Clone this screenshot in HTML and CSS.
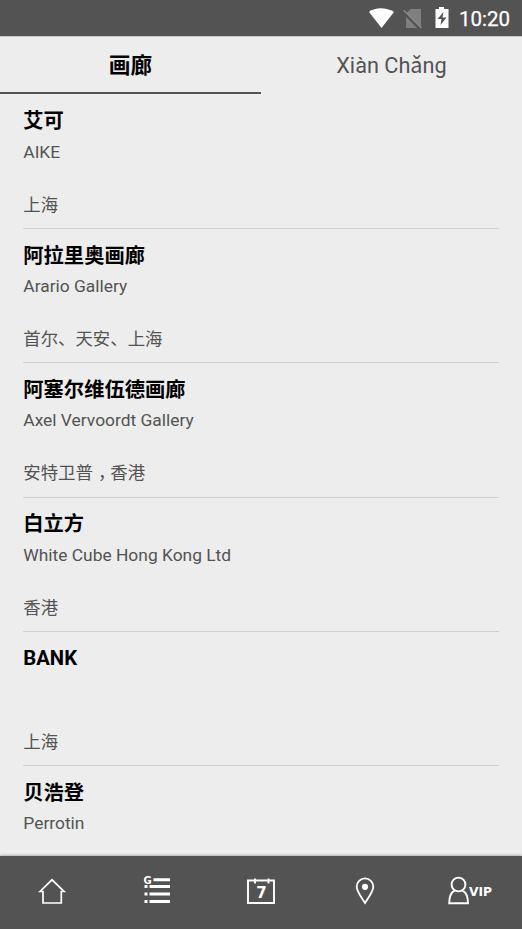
FILE: index.html
```html
<!DOCTYPE html>
<html lang="zh-CN">
<head>
<meta charset="utf-8">
<title>画廊</title>
<link rel="stylesheet" href="styles.css">
</head>
<body>
<div class="app">
  <header class="status">
    <svg class="status-icons" viewBox="0 0 84 36">
      <path d="M3 12C9 7 20 7 28 12L15.500 28Z" fill="#fff"/>
      <path d="M44 9h10.500v19H39.500V13.500z" transform="translate(.5 0)" fill="#7f7f7f"/>
      <path d="M37.300 11.500L54 28.500" stroke="#535353" stroke-width="3.500"/>
      <path d="M37.800 10.300L55.500 28" stroke="#8b8b8b" stroke-width="1.600"/>
      <path d="M69.500 9h3.500V7h5v2h4.500v19h-13z" fill="#fff"/>
      <path d="M77.500 12L71.500 19h4l-1 6 6-7.500h-4z" fill="#535353"/>
    </svg>
    <span class="clock">10:20</span>
  </header>
  <nav class="tabs">
    <a class="tab active">画廊</a>
    <a class="tab">Xiàn Chǎng</a>
  </nav>
  <main class="list">
    <article class="row"><h2>艾可</h2><p class="en">AIKE</p><p class="city">上海</p></article>
    <article class="row"><h2>阿拉里奥画廊</h2><p class="en">Arario Gallery</p><p class="city">首尔、天安、上海</p></article>
    <article class="row"><h2>阿塞尔维伍德画廊</h2><p class="en">Axel Vervoordt Gallery</p><p class="city">安特卫普<span class="comma">，</span>香港</p></article>
    <article class="row"><h2>白立方</h2><p class="en">White Cube Hong Kong Ltd</p><p class="city">香港</p></article>
    <article class="row"><h2>BANK</h2><p class="en"></p><p class="city">上海</p></article>
    <article class="row"><h2>贝浩登</h2><p class="en">Perrotin</p></article>
  </main>
  <footer class="bar">
    <a><svg viewBox="0 0 52 40"><path d="M14 21.500L26 9.800 38 21.500H35.300V33H17V21.500Z" fill="none" stroke="#fff" stroke-width="1.700"/></svg></a>
    <a><svg viewBox="0 0 52 40"><text class="g" x="12.600" y="14.200">G</text><path d="M22.500 9.700H39M18.500 16.500H39M18.500 24H39M18.500 31.500H39M13.500 16.500h3M13.500 24h3M13.500 31.500h3" stroke="#fff" stroke-width="2.900"/></svg></a>
    <a><svg viewBox="0 0 52 40"><path d="M13 10.500H39V33H13ZM20 8.500v5M33.500 8.500v5" fill="none" stroke="#fff" stroke-width="1.900"/><text class="seven" x="21.300" y="28">7</text></svg></a>
    <a><svg viewBox="0 0 52 40"><path d="M26 33C23 28 17.700 21.500 17.700 16.700a8.300 8.300 0 0 1 16.600 0C34.300 21.500 29 28 26 33Z" fill="none" stroke="#fff" stroke-width="1.800"/><circle cx="26" cy="16.800" r="3.100" fill="#fff"/></svg></a>
    <a><svg viewBox="0 0 52 40"><g fill="none" stroke="#fff" stroke-width="1.900"><circle cx="14.500" cy="14.500" r="6.900"/><path d="M10.700 20.300C6.700 22.500 5.200 27 5.200 33.200H24C24 27 22.500 22.500 18.200 20.300"/></g><text class="vip" x="25" y="26" textLength="23" lengthAdjust="spacingAndGlyphs">VIP</text></svg></a>
  </footer>
</div>
</body>
</html>
```
FILE: styles.css
```css
* { box-sizing: border-box; }
body {
  margin: 0;
  background: #ededed;
  font-family: Roboto, "Noto Sans CJK SC", sans-serif;
}
.app {
  width: 522px;
  height: 929px;
  display: flex;
  flex-direction: column;
  overflow: hidden;
}
.status {
  flex: none;
  height: 37px;
  padding-right: 12px;
  background: #535353;
  border-bottom: 1px solid #c9c9c9;
  display: flex;
  justify-content: flex-end;
  color: #fff;
}
.status-icons { width: 84px; height: 36px; margin-right: 9px; }
.clock { font-size: 20.500px; font-weight: 400; line-height: 38px; -webkit-text-stroke: .25px #fff; }
.tabs { flex: none; height: 57px; display: flex; }
.tab {
  flex: 1;
  height: 57px;
  line-height: 58px;
  text-align: center;
  font-size: 21.700px;
  color: #535353;
}
.tab.active {
  color: #000;
  font-weight: 700;
  border-bottom: 2px solid #535353;
}
.list { flex: 1; min-height: 0; padding: 0 23.300px; overflow: hidden; }
.row {
  height: 134.250px;
  padding-top: 11.500px;
  border-bottom: 1px solid #d0d0d0;
}
.row:first-child { height: 135px; padding-top: 12px; }
h2, p { margin: 0; white-space: nowrap; }
h2 { height: 30px; line-height: 30px; font-size: 20.300px; color: #000; }
.en, .city { font-size: 17.400px; line-height: 26px; color: #535353; }
.en { height: 26px; margin-top: 2.700px; }
.city { margin-top: 27px; }
.comma { font-feature-settings: "halt"; padding: 0 .2em 0 .3em; }
.bar {
  flex: none;
  height: 73px;
  display: flex;
  background: #535353;
  box-shadow: 0 -1px 2px rgba(0, 0, 0, .25);
}
.bar a { flex: 1; display: flex; justify-content: center; padding-top: 14px; }
.bar svg { width: 52px; height: 40px; overflow: visible; }
.bar text { fill: #fff; font-family: "DejaVu Sans", sans-serif; font-weight: 700; }
.g { font-size: 10px; }
.seven { font-size: 15px; }
.vip { font-size: 12.500px; }
```
